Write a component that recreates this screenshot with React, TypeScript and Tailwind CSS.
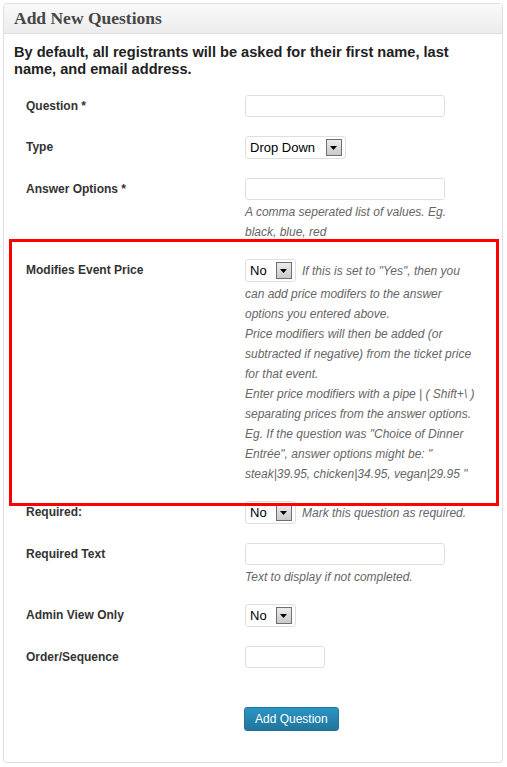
const sans = "font-['Liberation_Sans',Arial,sans-serif]";

function SelectBox({ value, width }: { value: string; width: string }) {
  return (
    <div
      className={`flex h-[23px] ${width} shrink-0 items-center justify-between rounded-[3px] border border-[#dfdfdf] bg-white pl-[4px] pr-[3px]`}
    >
      <span className="text-[13px] leading-none text-black">{value}</span>
      <span className="flex h-[17px] w-[16px] items-center justify-center border border-[#6f6f6f] bg-gradient-to-b from-[#ececec] to-[#c9c9c9]">
        <svg width="8" height="4" viewBox="0 0 8 4">
          <path d="M0 0 H7 L3.5 4 Z" fill="#000" />
        </svg>
      </span>
    </div>
  );
}

function TextBox({ width }: { width: string }) {
  return <div className={`h-[22px] ${width} rounded-[3px] border border-[#dfdfdf] bg-white`} />;
}

function Help({ children, className = '' }: { children: React.ReactNode; className?: string }) {
  return (
    <div className={`text-[12px] italic leading-[20px] text-[#666] ${className}`}>{children}</div>
  );
}

function Row({
  label,
  children,
  pb,
}: {
  label: string;
  children: React.ReactNode;
  pb: string;
}) {
  return (
    <div className={`grid grid-cols-[219px_1fr] pt-[10px] ${pb}`}>
      <div className="pt-[4px] text-[12px] font-bold leading-[14px] text-[#333]">{label}</div>
      <div>{children}</div>
    </div>
  );
}

export default function App() {
  return (
    <div className={`relative min-h-[767px] bg-white p-[3px] ${sans}`}>
      <div className="h-[760px] w-[500px] overflow-hidden rounded-[4px] border border-[#dfdfdf] bg-white">
        <div className="flex h-[30px] items-center border-b border-[#dfdfdf] bg-gradient-to-b from-[#f9f9f9] to-[#ececec] px-[10px]">
          <h3 className="font-['Liberation_Serif',Georgia,serif] text-[17.5px] font-bold text-[#464646]">
            Add New Questions
          </h3>
        </div>

        <p className="mt-[10px] px-[10px] text-[14.6px] font-bold leading-[17px] text-[#222]">
          By default, all registrants will be asked for their first name, last
          <br />
          name, and email address.
        </p>

        <div className="mt-[7px] pl-[22px]">
          <Row label="Question *" pb="pb-[9px]">
            <TextBox width="w-[200px]" />
          </Row>

          <Row label="Type" pb="pb-[9px]">
            <SelectBox value="Drop Down" width="w-[101px]" />
          </Row>

          <Row label="Answer Options *" pb="pb-[7px]">
            <TextBox width="w-[200px]" />
            <Help className="mt-[2px]">
              A comma seperated list of values. Eg.
              <br />
              black, blue, red
            </Help>
          </Row>

          <Row label="Modifies Event Price" pb="pb-[7px]">
            <div className="flex items-center gap-[6px]">
              <SelectBox value="No" width="w-[51px]" />
              <Help className="whitespace-nowrap">If this is set to "Yes", then you</Help>
            </div>
            <Help className="mt-[2px] whitespace-nowrap">
              can add price modifers to the answer
              <br />
              options you entered above.
              <br />
              Price modifiers will then be added (or
              <br />
              subtracted if negative) from the ticket price
              <br />
              for that event.
              <br />
              Enter price modifiers with a pipe | ( Shift+\ )
              <br />
              separating prices from the answer options.
              <br />
              Eg. If the question was "Choice of Dinner
              <br />
              Entrée", answer options might be: "
              <br />
              steak|39.95, chicken|34.95, vegan|29.95 "
            </Help>
          </Row>

          <Row label="Required:" pb="pb-[9px]">
            <div className="flex items-center gap-[6px]">
              <SelectBox value="No" width="w-[51px]" />
              <Help className="whitespace-nowrap">Mark this question as required.</Help>
            </div>
          </Row>

          <Row label="Required Text" pb="pb-[7px]">
            <TextBox width="w-[200px]" />
            <Help className="mt-[2px]">Text to display if not completed.</Help>
          </Row>

          <Row label="Admin View Only" pb="pb-[9px]">
            <SelectBox value="No" width="w-[51px]" />
          </Row>

          <Row label="Order/Sequence" pb="pb-[0px]">
            <TextBox width="w-[80px]" />
          </Row>

          <div className="pl-[218px] pt-[38px]">
            <button className="h-[24px] rounded-[3px] border border-[#21759b] bg-gradient-to-b from-[#2a95c5] to-[#21759b] px-[10px] text-[12px] text-white">
              Add Question
            </button>
          </div>
        </div>
      </div>

      <div className="absolute left-[9px] top-[239px] h-[267px] w-[490px] border-[3px] border-[#ff0000]" />
    </div>
  );
}
